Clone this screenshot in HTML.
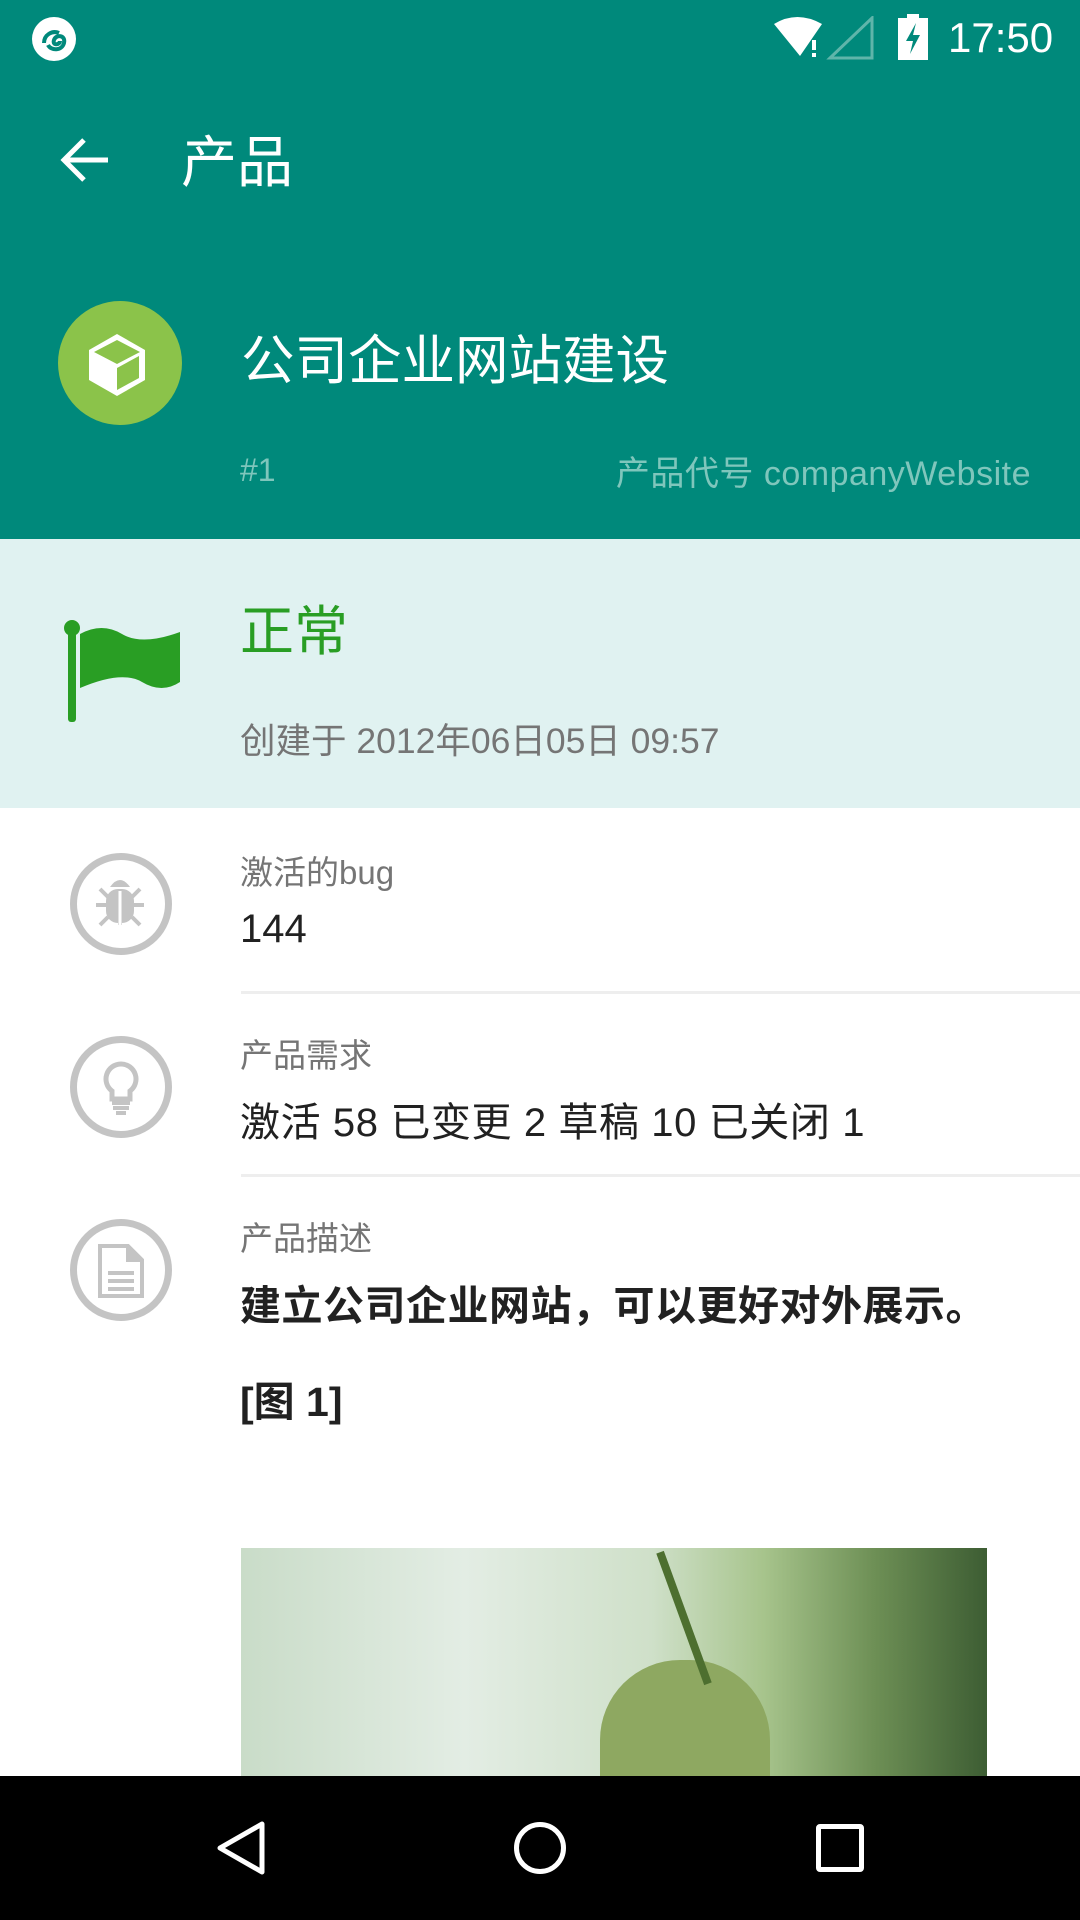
<!DOCTYPE html>
<html><head><meta charset="utf-8"><style>
*{margin:0;padding:0;box-sizing:border-box}
body{width:1080px;height:1920px;position:relative;overflow:hidden;background:#fff;font-family:"Liberation Sans","Noto Sans CJK SC",sans-serif}
.a{position:absolute;white-space:nowrap}
.lbl{font-size:33px;color:#757575}
.val{font-size:40px;color:#212121}
.ic{position:absolute;left:70px;width:102px;height:102px;border:7px solid #c4c4c4;border-radius:50%}
.div{position:absolute;left:241px;right:0;height:3px;background:#eee}
</style></head><body>
<div class="a" style="left:0;top:0;width:1080px;height:539px;background:#00897b"></div>
<svg class="a" style="left:30px;top:15px" width="48" height="48" viewBox="0 0 48 48"><circle cx="24" cy="24" r="22" fill="#fff"/><path d="M14 28c0-8 8-13 15-10M18 30c3 6 14 6 16-2s-8-9-10-3 6 5 6 1" stroke="#00897b" stroke-width="4" fill="none"/></svg>
<svg class="a" style="left:772px;top:16px" width="120" height="44" viewBox="0 0 120 44"><path d="M2 8 Q25-6 50 8 L28 40Z" fill="#fff"/><rect x="40" y="24" width="4" height="10" fill="#fff"/><rect x="40" y="37" width="4" height="4" fill="#fff"/><path d="M58 42 L100 2 L100 42Z" fill="none" stroke="#5fb5aa" stroke-width="3"/></svg>
<svg class="a" style="left:898px;top:14px" width="30" height="46" viewBox="0 0 30 46"><rect x="9" y="0" width="12" height="5" fill="#fff"/><rect x="0" y="4" width="30" height="42" fill="#fff"/><path d="M18 9 L8 27 H15 L12 40 L22 21 H15Z" fill="#00897b"/></svg>
<div class="a" style="left:948px;top:14px;font-size:42px;color:#fff">17:50</div>
<svg class="a" style="left:58px;top:134px" width="52" height="52" viewBox="0 0 52 52"><path d="M50 26H6M26 6L6 26l20 20" stroke="#fff" stroke-width="5" fill="none"/></svg>
<div class="a" style="left:181px;top:118px;font-size:56px;color:#fff">产品</div>
<div class="a" style="left:58px;top:301px;width:124px;height:124px;border-radius:50%;background:#8bc34a"></div>
<svg class="a" style="left:82px;top:330px" width="70" height="70" viewBox="0 0 70 70"><path d="M35 4 L63 20 V50 L35 66 L7 50 V20Z" fill="#fff"/><path d="M12 22 L35 34 L58 22 L35 10Z M35 38 V60 L57 48 V26Z" fill="#8bc34a"/></svg>
<div class="a" style="left:241px;top:318px;font-size:53.5px;color:#fff">公司企业网站建设</div>
<div class="a" style="left:240px;top:452px;font-size:32px;color:#7fc6bc">#1</div>
<div class="a" style="right:49px;top:446px;font-size:34px;color:#7fc6bc;letter-spacing:0.5px">产品代号 companyWebsite</div>
<div class="a" style="left:0;top:539px;width:1080px;height:269px;background:#e0f2f1"></div>
<svg class="a" style="left:62px;top:618px" width="122" height="106" viewBox="0 0 122 106"><circle cx="10" cy="10" r="8" fill="#299e24"/><rect x="6" y="10" width="8" height="94" rx="3" fill="#299e24"/><path d="M18 16 Q40 4 60 16 T118 14 V64 Q100 76 80 64 T18 70Z" fill="#299e24"/></svg>
<div class="a" style="left:240px;top:587px;font-size:54px;color:#299e24">正常</div>
<div class="a" style="left:240px;top:713px;font-size:35.5px;color:#757575">创建于 2012年06日05日 09:57</div>
<div class="ic" style="top:853px"></div>
<svg class="a" style="left:92px;top:875px" width="56" height="58" viewBox="0 0 56 58"><g fill="#c4c4c4"><path d="M18 12 Q28-2 38 12Z"/><rect x="14" y="14" width="28" height="34" rx="12"/></g><path d="M28 16V50M4 30H52M8 14l8 8M48 14l-8 8M8 50l8-8M48 50l-8-8" stroke="#c4c4c4" stroke-width="4"/><path d="M28 16V50" stroke="#fff" stroke-width="3"/></svg>
<div class="a lbl" style="left:240px;top:846px">激活的bug</div>
<div class="a val" style="left:240px;top:907px">144</div>
<div class="div" style="top:991px"></div>
<div class="ic" style="top:1036px"></div>
<svg class="a" style="left:100px;top:1060px" width="42" height="56" viewBox="0 0 42 56"><path d="M21 4a15 15 0 0 0-9 27v8h18v-8a15 15 0 0 0-9-27z" fill="none" stroke="#c4c4c4" stroke-width="5"/><path d="M12 43h18M13 48h16M16 53h10" stroke="#c4c4c4" stroke-width="4"/></svg>
<div class="a lbl" style="left:240px;top:1029px">产品需求</div>
<div class="a val" style="left:240px;top:1090px;letter-spacing:0.6px">激活 58 已变更 2 草稿 10 已关闭 1</div>
<div class="div" style="top:1174px"></div>
<div class="ic" style="top:1219px"></div>
<svg class="a" style="left:96px;top:1243px" width="50" height="56" viewBox="0 0 50 56"><path d="M4 3h28l14 14v36H4z" fill="none" stroke="#c4c4c4" stroke-width="4"/><path d="M30 3v16h16" fill="#c4c4c4"/><path d="M12 30h26M12 38h26M12 46h26" stroke="#c4c4c4" stroke-width="4"/></svg>
<div class="a lbl" style="left:240px;top:1212px">产品描述</div>
<div class="a val" style="left:240px;top:1272px;font-weight:bold;font-size:41px;letter-spacing:0.5px">建立公司企业网站，可以更好对外展示。</div>
<div class="a val" style="left:240px;top:1368px;font-weight:bold;font-size:41px">[图 1]</div>
<div class="a" style="left:241px;top:1548px;width:746px;height:228px;background:linear-gradient(90deg,#c9dcc8 0%,#e3ede4 30%,#cfe0c9 55%,#a7c48c 70%,#6d8f55 85%,#3d5d33 100%)"></div>
<div class="a" style="left:600px;top:1660px;width:170px;height:116px;border-radius:80px 80px 0 0;background:#8ea861"></div>
<div class="a" style="left:680px;top:1548px;width:8px;height:140px;background:#4d6f2f;transform:rotate(-20deg)"></div>
<div class="a" style="left:0;top:1776px;width:1080px;height:144px;background:#000"></div>
<svg class="a" style="left:212px;top:1818px" width="60" height="60" viewBox="0 0 60 60"><path d="M50 6 L8 30 L50 54Z" fill="none" stroke="#fff" stroke-width="5" stroke-linejoin="round"/></svg>
<div class="a" style="left:514px;top:1822px;width:52px;height:52px;border:5px solid #fff;border-radius:50%"></div>
<div class="a" style="left:816px;top:1824px;width:48px;height:48px;border:5px solid #fff;border-radius:4px"></div>
</body></html>
